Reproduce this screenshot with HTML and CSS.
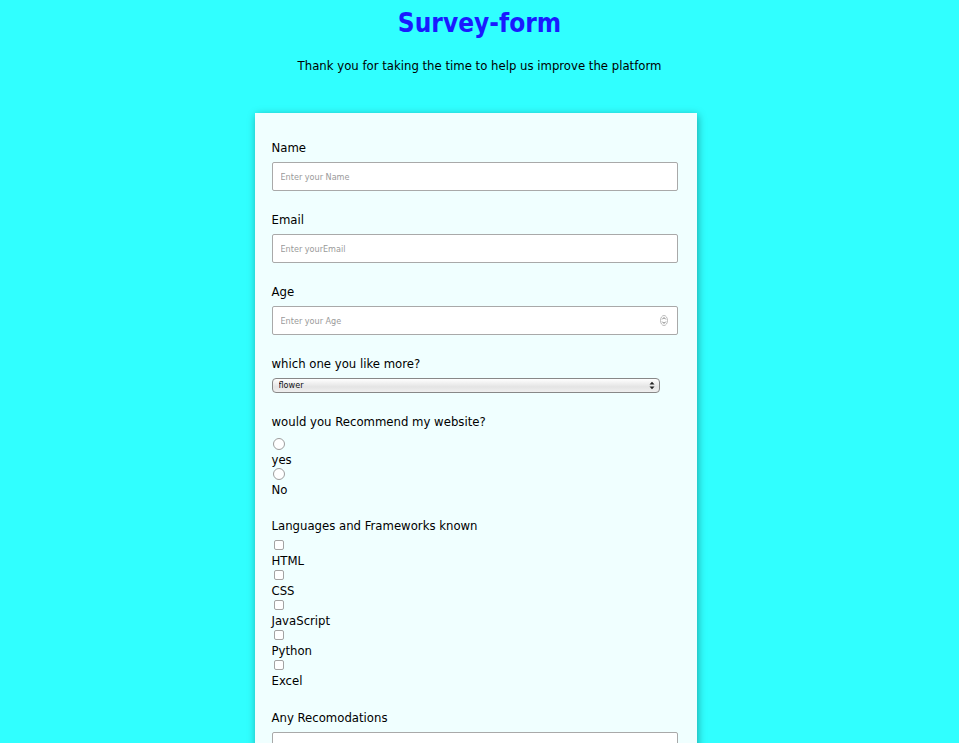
FILE: index.html
```html
<!DOCTYPE html>
<html lang="en">
<head>
<meta charset="utf-8">
<title>Survey-form</title>
<link rel="stylesheet" href="styles.css">
</head>
<body>
<header class="header">
  <h1 class="title">Survey-form</h1>
  <p class="subtitle">Thank you for taking the time to help us improve the platform</p>
</header>
<form class="survey">
  <div class="field">
    <label class="label" for="name">Name</label>
    <input class="input" id="name" type="text" placeholder="Enter your Name">
  </div>
  <div class="field">
    <label class="label" for="email">Email</label>
    <input class="input" id="email" type="email" placeholder="Enter yourEmail">
  </div>
  <div class="field">
    <label class="label" for="age">Age</label>
    <div class="number-wrap">
      <input class="input" id="age" type="text" placeholder="Enter your Age">
      <span class="spinner"><svg width="8" height="11" viewBox="0 0 8 11"><ellipse cx="4" cy="5.5" rx="3.5" ry="5" fill="#fff" stroke="#aaa" stroke-width="0.8"/><path d="M2.3 4.3 L4 2.6 L5.7 4.3 M2.3 6.7 L4 8.4 L5.7 6.7" fill="none" stroke="#666" stroke-width="0.9"/></svg></span>
    </div>
  </div>
  <div class="field">
    <label class="label" for="pick">which one you like more?</label>
    <div class="select-wrap">
      <select class="select" id="pick"><option>flower</option></select>
      <span class="select-arrow"><svg width="6" height="9" viewBox="0 0 6 9"><path d="M0.5 3.5 L3 0.8 L5.5 3.5 Z M0.5 5.5 L3 8.2 L5.5 5.5 Z" fill="#222"/></svg></span>
    </div>
  </div>
  <div class="field field-radio">
    <p class="label label-group">would you Recommend my website?</p>
    <div class="choices choices-radio">
      <input class="radio" type="radio" name="rec" id="yes"><label class="choice" for="yes">yes</label>
      <input class="radio" type="radio" name="rec" id="no"><label class="choice" for="no">No</label>
    </div>
  </div>
  <div class="field">
    <p class="label label-group">Languages and Frameworks known</p>
    <div class="choices choices-check">
      <input class="check" type="checkbox" id="html"><label class="choice" for="html">HTML</label>
      <input class="check" type="checkbox" id="css"><label class="choice" for="css">CSS</label>
      <input class="check" type="checkbox" id="js"><label class="choice" for="js">JavaScript</label>
      <input class="check" type="checkbox" id="py"><label class="choice" for="py">Python</label>
      <input class="check" type="checkbox" id="xl"><label class="choice" for="xl">Excel</label>
    </div>
  </div>
  <div class="field">
    <label class="label" for="rec">Any Recomodations</label>
    <textarea class="textarea" id="rec"></textarea>
  </div>
</form>
</body>
</html>
```
FILE: styles.css
```css
html, body {
  margin: 0;
  padding: 0;
}
body {
  background: #30ffff;
  font-family: "DejaVu Sans Condensed", "DejaVu Sans", sans-serif;
  color: #000;
  font-size: 13px;
}
.header {
  text-align: center;
  padding-top: 8px;
}
.title {
  margin: 0;
  font-size: 26px;
  line-height: 30px;
  font-weight: bold;
  color: #1a1aff;
}
.subtitle {
  margin: 19px 0 0;
  font-size: 13px;
  line-height: 17px;
}
.survey {
  width: 406px;
  margin: 39px auto 0;
  padding: 26px 19px 40px 17px;
  background: #f0ffff;
  box-shadow: 1px 2px 8px rgba(0, 0, 0, 0.35);
  position: relative;
  left: -4px;
}
.field {
  margin-bottom: 20px;
}
.field-radio {
  margin-bottom: 19px;
}
.label {
  display: block;
  margin: 0 0 6px;
  font-size: 13px;
  line-height: 17px;
}
.label-group {
  margin-bottom: 0;
}
.input {
  display: block;
  box-sizing: border-box;
  width: 406px;
  height: 29px;
  padding: 0 8px;
  border: 1px solid #a9a9a9;
  border-radius: 2px;
  background: #fff;
  font-family: inherit;
  font-size: 9px;
  outline: none;
}
.input::placeholder {
  color: #9a9a9a;
}
.number-wrap {
  position: relative;
  width: 406px;
}
.spinner {
  position: absolute;
  right: 10px;
  top: 9px;
  line-height: 0;
}
.select-wrap {
  position: relative;
  width: 388px;
}
.select {
  display: block;
  appearance: none;
  -webkit-appearance: none;
  box-sizing: border-box;
  width: 388px;
  height: 15px;
  padding: 0 0 0 6px;
  border: 1px solid #888;
  border-radius: 4px;
  background: linear-gradient(#ffffff, #e4e4e4 60%, #efefef);
  font-family: inherit;
  font-size: 9px;
  line-height: 13px;
  color: #111;
}
.select-arrow {
  position: absolute;
  right: 5px;
  top: 3px;
  line-height: 0;
}
.choices {
  display: flex;
  flex-direction: column;
  align-items: flex-start;
}
.choices-radio {
  margin-top: 8px;
}
.choices-check {
  margin-top: 5px;
}
.radio {
  margin: 0 0 2px 1px;
  width: 12px;
  height: 12px;
  appearance: none;
  -webkit-appearance: none;
  border: 1px solid #9d9d9d;
  border-radius: 50%;
  background: #fff;
}
.check {
  margin: 1px 0 3px 2px;
  width: 10px;
  height: 10px;
  appearance: none;
  -webkit-appearance: none;
  border: 1px solid #a3a3a3;
  border-radius: 2px;
  background: #fff;
}
.choice {
  font-size: 13px;
  line-height: 16px;
}
.textarea {
  display: block;
  box-sizing: border-box;
  width: 406px;
  height: 80px;
  border: 1px solid #a9a9a9;
  border-radius: 2px;
  background: #fff;
  resize: none;
}
```
